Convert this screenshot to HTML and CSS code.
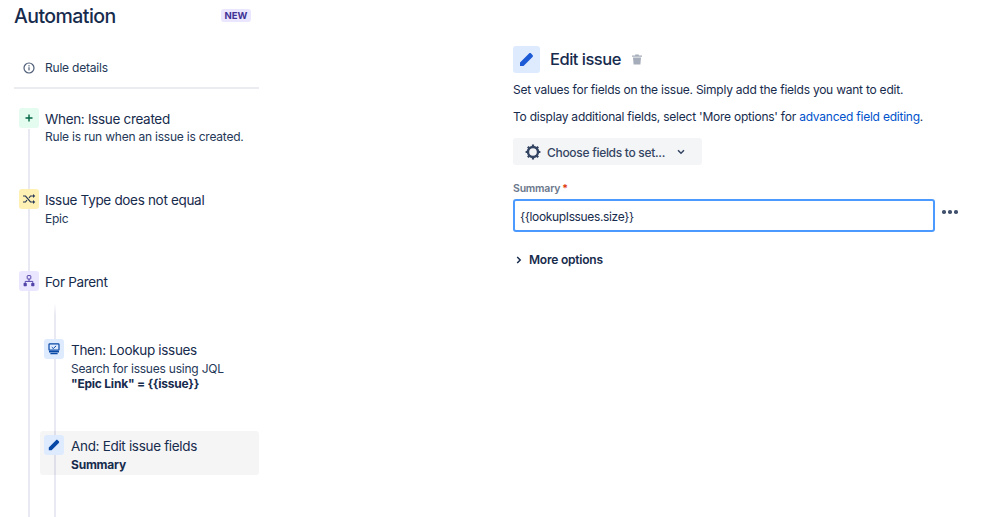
FILE: index.html
```html
<!DOCTYPE html>
<html lang="en">
<head>
    <meta charset="UTF-8">
    <meta name="viewport" content="width=device-width, initial-scale=1.0">
    <title>Automation</title>
    <link rel="stylesheet" href="styles.css">
</head>
<body>
    <div class="page">
        <div class="sidebar">
            <div class="sidebar-header">
                <h1 class="app-title">Automation</h1>
                <span class="badge-new">NEW</span>
            </div>
            <div class="rule-details">
                <svg class="info-icon" viewBox="0 0 12 12" width="12" height="12">
                    <circle cx="6" cy="6" r="5" fill="none" stroke="#505f79" stroke-width="1.2"/>
                    <rect x="5.4" y="5.2" width="1.2" height="3.2" fill="#505f79"/>
                    <rect x="5.4" y="3.2" width="1.2" height="1.2" fill="#505f79"/>
                </svg>
                <span>Rule details</span>
            </div>
            <div class="flow">
                <div class="node node-when">
                    <div class="node-icon icon-green">
                        <svg viewBox="0 0 10 10" width="10" height="10">
                            <path d="M5 1.5v7M1.5 5h7" stroke="#006644" stroke-width="1.4" fill="none"/>
                        </svg>
                    </div>
                    <div>
                        <div class="node-title">When: Issue created</div>
                        <div class="node-text node-text-first">Rule is run when an issue is created.</div>
                    </div>
                </div>
                <div class="node node-condition">
                    <div class="node-icon icon-yellow">
                        <svg viewBox="0 0 14 12" width="14" height="12">
                            <path d="M1 3h2.5l5 6H12M1 9h2.5l1.5-2M7 5l1.5-2H12" stroke="#253858" stroke-width="1.2" fill="none"/>
                            <path d="M11 1l2.2 2L11 5zM11 7l2.2 2L11 11z" fill="#253858"/>
                        </svg>
                    </div>
                    <div>
                        <div class="node-title">Issue Type does not equal</div>
                        <div class="node-text node-text-gap">Epic</div>
                    </div>
                </div>
                <div class="node node-branch">
                    <div class="node-icon icon-purple">
                        <svg viewBox="0 0 12 12" width="12" height="12">
                            <rect x="4.2" y="0.6" width="3.6" height="3.4" rx="0.6" fill="none" stroke="#5243aa" stroke-width="1"/>
                            <rect x="0.6" y="8" width="3.2" height="3.2" rx="0.6" fill="#5243aa"/>
                            <rect x="8.2" y="8" width="3.2" height="3.2" rx="0.6" fill="#5243aa"/>
                            <path d="M6 4v2.4M2.2 8V6.4h7.6V8" stroke="#5243aa" stroke-width="1" fill="none"/>
                        </svg>
                    </div>
                    <div class="node-title">For Parent</div>
                </div>
                <div class="nested">
                    <div class="node node-lookup">
                        <div class="node-icon icon-blue">
                            <svg viewBox="0 0 12 12" width="12" height="12">
                                <rect x="1" y="0.8" width="10" height="6.4" rx="0.8" fill="none" stroke="#0747a6" stroke-width="1.2"/>
                                <path d="M3.8 4.2l1.5 1.3 2.8-2.6" stroke="#0747a6" stroke-width="1" fill="none"/>
                                <path d="M1 8h10v1.4H1zM2.4 10h7.2v1.2H2.4z" fill="#0747a6"/>
                            </svg>
                        </div>
                        <div>
                            <div class="node-title">Then: Lookup issues</div>
                            <div class="node-text node-text-gap">Search for issues using JQL</div>
                            <div class="node-text node-strong">"Epic Link" = {{issue}}</div>
                        </div>
                    </div>
                    <div class="node node-active">
                        <div class="node-icon icon-blue">
                            <svg viewBox="0 0 12 12" width="12" height="12">
                                <path d="M0.8 8.4L8 1.2c.5-.5 1.2-.5 1.7 0l1.1 1.1c.5.5.5 1.2 0 1.7L3.6 11.2H.8z" fill="#0747a6"/>
                            </svg>
                        </div>
                        <div>
                            <div class="node-title">And: Edit issue fields</div>
                            <div class="node-text node-text-gap node-strong">Summary</div>
                        </div>
                    </div>
                </div>
            </div>
        </div>

        <div class="editor">
            <div class="editor-header">
                <div class="editor-icon">
                    <svg viewBox="0 0 12 12" width="15" height="15">
                        <path d="M0.8 8.4L8 1.2c.5-.5 1.2-.5 1.7 0l1.1 1.1c.5.5.5 1.2 0 1.7L3.6 11.2H.8z" fill="#1d5bd6"/>
                    </svg>
                </div>
                <h2 class="editor-title">Edit issue</h2>
                <svg class="trash-icon" viewBox="0 0 10 11" width="10" height="11">
                    <path d="M0 1.4h3.2V.4h3.6v1H10v1.3H0zM1 3.4h8l-.6 7.2H1.6z" fill="#a5adba"/>
                </svg>
            </div>
            <p class="editor-text">Set values for fields on the issue. Simply add the fields you want to edit.</p>
            <p class="editor-text">To display additional fields, select 'More options' for <a href="#" class="editor-link">advanced field editing</a>.</p>
            <button class="choose-button">
                <svg viewBox="0 0 16 16" width="16" height="16">
                    <circle cx="8" cy="8" r="5" fill="none" stroke="#344563" stroke-width="2.4"/>
                    <path d="M8 .6v3M8 12.4v3M.6 8h3M12.4 8h3M2.8 2.8l2 2M11.2 11.2l2 2M2.8 13.2l2-2M11.2 4.8l2-2" stroke="#344563" stroke-width="2.2"/>
                </svg>
                <span>Choose fields to set...</span>
                <svg class="chevron" viewBox="0 0 8 6" width="8" height="6">
                    <path d="M1 1.2l3 3 3-3" stroke="#344563" stroke-width="1.5" fill="none"/>
                </svg>
            </button>
            <label class="field-label">Summary<span class="required">*</span></label>
            <div class="field-row">
                <input class="field-input" type="text" value="{{lookupIssues.size}}">
                <div class="more-dots"><span></span><span></span><span></span></div>
            </div>
            <div class="more-options">
                <svg viewBox="0 0 6 8" width="6" height="8">
                    <path d="M1.2 1l3 3-3 3" stroke="#172b4d" stroke-width="1.5" fill="none"/>
                </svg>
                <span>More options</span>
            </div>
        </div>
    </div>
</body>
</html>
```

FILE: styles.css
```css
* {
    margin: 0;
    padding: 0;
    box-sizing: border-box;
    font-family: Inter, "Noto Sans", sans-serif;
}

html, body {
    height: 100%;
    overflow: hidden;
    background: #fff;
    color: #172b4d;
}

.page {
    display: flex;
    height: 517px;
}

.sidebar {
    width: 245px;
    margin-left: 14px;
    flex-shrink: 0;
}

.sidebar-header {
    display: flex;
    justify-content: space-between;
    height: 40px;
    padding: 4px 8px 0 0;
}

.app-title {
    font-size: 19.5px;
    font-weight: 500;
    line-height: 24px;
    letter-spacing: -0.55px;
    color: #172b4d;
}

.badge-new {
    margin-top: 5px;
    height: 13px;
    width: 30px;
    border-radius: 3px;
    background: #eae6ff;
    color: #403294;
    font-size: 9.5px;
    font-weight: 700;
    line-height: 13px;
    text-align: center;
}

.rule-details {
    display: flex;
    align-items: center;
    gap: 10px;
    height: 49px;
    padding: 8px 0 0 9px;
    border-bottom: 2px solid #ebecf0;
    font-size: 12px;
    letter-spacing: -0.2px;
    color: #253858;
}

.flow {
    position: relative;
    padding-top: 19px;
    height: 428px;
}

.flow::before {
    content: '';
    position: absolute;
    left: 14px;
    top: 40px;
    bottom: 0;
    width: 2px;
    background: #e9e9f3;
}

.node {
    position: relative;
    display: flex;
    gap: 6px;
}

.node-when {
    height: 81px;
    padding-left: 5px;
}

.node-condition {
    height: 82px;
    padding-left: 5px;
}

.node-branch {
    padding-left: 5px;
}

.node-icon {
    width: 20px;
    height: 20px;
    border-radius: 3px;
    flex-shrink: 0;
    display: flex;
    align-items: center;
    justify-content: center;
}

.icon-green {
    background: #e3fcef;
}

.icon-yellow {
    background: #fff0b3;
}

.icon-purple {
    background: #eae6ff;
}

.icon-blue {
    background: #deebff;
}

.node-title {
    margin-top: 1px;
    font-size: 13.5px;
    line-height: 20px;
    letter-spacing: -0.32px;
    color: #172b4d;
}

.node-text {
    font-size: 12px;
    line-height: 16px;
    letter-spacing: -0.22px;
    color: #253858;
}

.node-text-gap {
    margin-top: 1px;
}

.node-strong {
    font-weight: 700;
    color: #172b4d;
}

.node-lookup .node-strong {
    margin-top: -1px;
}

.nested {
    position: relative;
    margin-top: 47px;
    padding-left: 30px;
    height: 178px;
}

.nested::before {
    content: '';
    position: absolute;
    left: 40px;
    top: -36px;
    bottom: 0;
    width: 2px;
    background: linear-gradient(to bottom, #fff, #e9e9f3 12px);
}

.node-lookup {
    height: 92px;
    gap: 7px;
}

.node-active {
    margin-left: -4px;
    padding: 4px 0 0 4px;
    height: 44px;
    gap: 7px;
    border-radius: 3px;
    background: rgba(0, 0, 0, 0.04);
}

.editor {
    margin-left: 254px;
    width: 450px;
    padding-top: 46px;
}

.editor-header {
    display: flex;
    align-items: center;
    height: 27px;
}

.editor-icon {
    width: 27px;
    height: 27px;
    border-radius: 3px;
    background: #deebff;
    display: flex;
    align-items: center;
    justify-content: center;
}

.editor-title {
    margin: -2px 0 0 10px;
    font-size: 16.5px;
    font-weight: 500;
    letter-spacing: -0.5px;
    color: #172b4d;
}

.trash-icon {
    margin: -1px 0 0 11px;
}

.editor-text {
    margin-top: 9px;
    font-size: 12px;
    line-height: 18px;
    letter-spacing: -0.23px;
    white-space: nowrap;
    color: #172b4d;
}

.editor-header + .editor-text {
    margin-top: 8px;
}

.editor-link {
    color: #0052cc;
    text-decoration: none;
}

.choose-button {
    display: flex;
    align-items: center;
    width: 189px;
    height: 27px;
    margin-top: 12px;
    padding-left: 12px;
    border: none;
    border-radius: 3px;
    background: #f4f5f7;
    color: #344563;
    font-size: 12px;
    font-weight: 500;
    letter-spacing: -0.3px;
}

.choose-button span {
    margin-left: 6px;
    padding-top: 1px;
}

.chevron {
    margin-left: 12px;
}

.field-label {
    display: block;
    margin-top: 17px;
    font-size: 10.5px;
    font-weight: 600;
    line-height: 13px;
    letter-spacing: -0.2px;
    color: #6b778c;
}

.required {
    margin-left: 2px;
    color: #de350b;
}

.field-row {
    display: flex;
    align-items: center;
    margin-top: 4px;
}

.field-input {
    width: 422px;
    height: 33px;
    padding: 1px 5px 0;
    border: 2px solid #4c9aff;
    border-radius: 3px;
    outline: none;
    font-size: 12px;
    letter-spacing: -0.35px;
    color: #172b4d;
}

.more-dots {
    display: flex;
    gap: 2.5px;
    margin: 0 0 7px 7px;
    flex-shrink: 0;
}

.more-dots span {
    width: 3.5px;
    height: 3.5px;
    border-radius: 50%;
    background: #42526e;
}

.more-options {
    display: flex;
    align-items: center;
    gap: 7px;
    margin-top: 20px;
    padding-left: 3px;
    font-size: 12px;
    font-weight: 600;
    line-height: 16px;
    letter-spacing: -0.22px;
    color: #172b4d;
}
```
